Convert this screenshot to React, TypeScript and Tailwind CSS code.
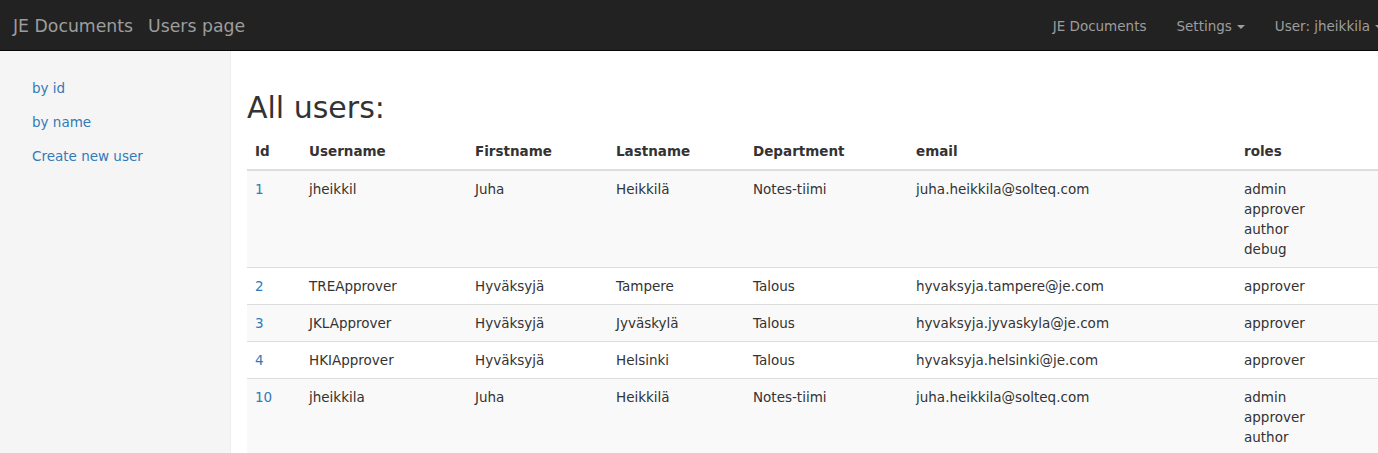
import React from 'react'

const font = { fontFamily: '"DejaVu Sans", Verdana, sans-serif' }

type User = {
  id: number
  username: string
  firstname: string
  lastname: string
  department: string
  email: string
  roles: string[]
}

const users: User[] = [
  { id: 1, username: 'jheikkil', firstname: 'Juha', lastname: 'Heikkilä', department: 'Notes-tiimi', email: 'juha.heikkila@solteq.com', roles: ['admin', 'approver', 'author', 'debug'] },
  { id: 2, username: 'TREApprover', firstname: 'Hyväksyjä', lastname: 'Tampere', department: 'Talous', email: 'hyvaksyja.tampere@je.com', roles: ['approver'] },
  { id: 3, username: 'JKLApprover', firstname: 'Hyväksyjä', lastname: 'Jyväskylä', department: 'Talous', email: 'hyvaksyja.jyvaskyla@je.com', roles: ['approver'] },
  { id: 4, username: 'HKIApprover', firstname: 'Hyväksyjä', lastname: 'Helsinki', department: 'Talous', email: 'hyvaksyja.helsinki@je.com', roles: ['approver'] },
  { id: 10, username: 'jheikkila', firstname: 'Juha', lastname: 'Heikkilä', department: 'Notes-tiimi', email: 'juha.heikkila@solteq.com', roles: ['admin', 'approver', 'author'] },
]

function Caret() {
  return <span className="inline-block ml-[5px] align-middle w-0 h-0 border-t-4 border-x-4 border-t-[#9d9d9d] border-x-transparent" />
}

function Navbar() {
  return (
    <nav className="h-[51px] bg-[#222] border-b border-[#080808] flex items-center justify-between text-[#9d9d9d] shrink-0">
      <div className="flex items-center pl-[13px] pt-[3px] text-[17.3px] gap-[15px]">
        <a>JE Documents</a>
        <a>Users page</a>
      </div>
      <ul className="flex items-center pt-[1px] text-[13.5px] leading-5">
        <li className="px-[15px] py-[15px]">JE Documents</li>
        <li className="px-[15px] py-[15px]">Settings<Caret /></li>
        <li className="px-[15px] py-[15px]">User: jheikkila<Caret /></li>
      </ul>
    </nav>
  )
}

function Sidebar() {
  const links = ['by id', 'by name', 'Create new user']
  return (
    <aside className="w-[231px] shrink-0 bg-[#f5f5f5] border-r border-[#eee] pt-[20px]">
      <ul className="text-[13.5px] leading-5 text-[#337ab7]">
        {links.map((l) => (
          <li key={l} className="px-[32px] py-[7px]">{l}</li>
        ))}
      </ul>
    </aside>
  )
}

export default function App() {
  return (
    <div className="w-full h-[453px] overflow-hidden bg-white text-[#333]" style={font}>
      <div className="w-[1398px] h-full flex flex-col">
        <Navbar />
        <div className="flex flex-1">
          <Sidebar />
          <main className="flex-1 px-[16px] pt-[38px]">
            <h1 className="text-[30px] leading-[38px] mb-[6px] text-[#333]">All users:</h1>
            <table className="w-full table-fixed border-collapse text-[13.5px] leading-5">
              <colgroup>
                <col className="w-[54px]" />
                <col className="w-[166px]" />
                <col className="w-[141px]" />
                <col className="w-[137px]" />
                <col className="w-[163px]" />
                <col className="w-[328px]" />
                <col />
              </colgroup>
              <thead>
                <tr className="border-b-2 border-[#ddd]">
                  {['Id', 'Username', 'Firstname', 'Lastname', 'Department', 'email', 'roles'].map((h) => (
                    <th key={h} className="p-[8px] text-left font-bold">{h}</th>
                  ))}
                </tr>
              </thead>
              <tbody>
                {users.map((u, i) => (
                  <tr key={u.id} className={(i % 2 === 0 ? 'bg-[#f9f9f9]' : 'bg-white') + ' border-t border-[#ddd] align-top'}>
                    <td className="p-[8px] text-[#337ab7]">{u.id}</td>
                    <td className="p-[8px]">{u.username}</td>
                    <td className="p-[8px]">{u.firstname}</td>
                    <td className="p-[8px]">{u.lastname}</td>
                    <td className="p-[8px]">{u.department}</td>
                    <td className="p-[8px]">{u.email}</td>
                    <td className="p-[8px]">
                      {u.roles.map((r) => (
                        <div key={r}>{r}</div>
                      ))}
                    </td>
                  </tr>
                ))}
              </tbody>
            </table>
          </main>
        </div>
      </div>
    </div>
  )
}
